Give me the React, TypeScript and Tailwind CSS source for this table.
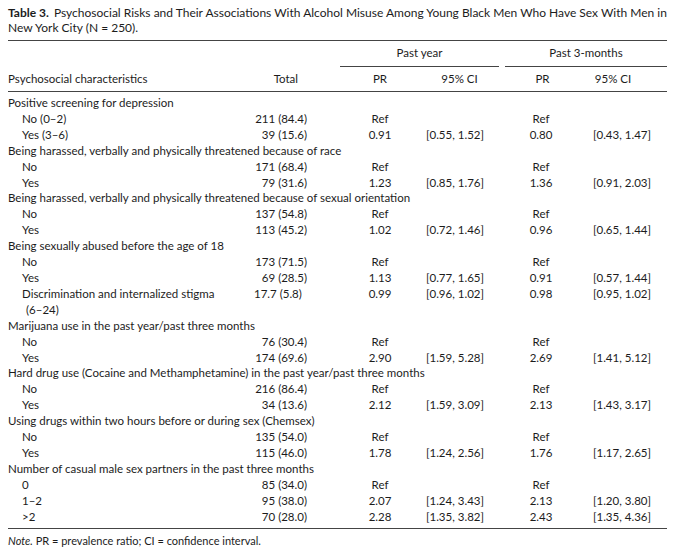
const rows: {
  label: string;
  sub?: boolean;
  total?: string;
  pr1?: string;
  ci1?: string;
  pr2?: string;
  ci2?: string;
}[] = [
  { label: "Positive screening for depression" },
  { label: "No (0–2)", sub: true, total: "211 (84.4)", pr1: "Ref", pr2: "Ref" },
  { label: "Yes (3–6)", sub: true, total: "39 (15.6)", pr1: "0.91", ci1: "[0.55, 1.52]", pr2: "0.80", ci2: "[0.43, 1.47]" },
  { label: "Being harassed, verbally and physically threatened because of race" },
  { label: "No", sub: true, total: "171 (68.4)", pr1: "Ref", pr2: "Ref" },
  { label: "Yes", sub: true, total: "79 (31.6)", pr1: "1.23", ci1: "[0.85, 1.76]", pr2: "1.36", ci2: "[0.91, 2.03]" },
  { label: "Being harassed, verbally and physically threatened because of sexual orientation" },
  { label: "No", sub: true, total: "137 (54.8)", pr1: "Ref", pr2: "Ref" },
  { label: "Yes", sub: true, total: "113 (45.2)", pr1: "1.02", ci1: "[0.72, 1.46]", pr2: "0.96", ci2: "[0.65, 1.44]" },
  { label: "Being sexually abused before the age of 18" },
  { label: "No", sub: true, total: "173 (71.5)", pr1: "Ref", pr2: "Ref" },
  { label: "Yes", sub: true, total: "69 (28.5)", pr1: "1.13", ci1: "[0.77, 1.65]", pr2: "0.91", ci2: "[0.57, 1.44]" },
  { label: "STIGMA" },
  { label: "Marijuana use in the past year/past three months" },
  { label: "No", sub: true, total: "76 (30.4)", pr1: "Ref", pr2: "Ref" },
  { label: "Yes", sub: true, total: "174 (69.6)", pr1: "2.90", ci1: "[1.59, 5.28]", pr2: "2.69", ci2: "[1.41, 5.12]" },
  { label: "Hard drug use (Cocaine and Methamphetamine) in the past year/past three months" },
  { label: "No", sub: true, total: "216 (86.4)", pr1: "Ref", pr2: "Ref" },
  { label: "Yes", sub: true, total: "34 (13.6)", pr1: "2.12", ci1: "[1.59, 3.09]", pr2: "2.13", ci2: "[1.43, 3.17]" },
  { label: "Using drugs within two hours before or during sex (Chemsex)" },
  { label: "No", sub: true, total: "135 (54.0)", pr1: "Ref", pr2: "Ref" },
  { label: "Yes", sub: true, total: "115 (46.0)", pr1: "1.78", ci1: "[1.24, 2.56]", pr2: "1.76", ci2: "[1.17, 2.65]" },
  { label: "Number of casual male sex partners in the past three months" },
  { label: "0", sub: true, total: "85 (34.0)", pr1: "Ref", pr2: "Ref" },
  { label: "1–2", sub: true, total: "95 (38.0)", pr1: "2.07", ci1: "[1.24, 3.43]", pr2: "2.13", ci2: "[1.20, 3.80]" },
  { label: ">2", sub: true, total: "70 (28.0)", pr1: "2.28", ci1: "[1.35, 3.82]", pr2: "2.43", ci2: "[1.35, 4.36]" },
];

const cols =
  "grid grid-cols-[242px_57px_33px_80px_79px_6px_72px_90px]";

export default function App() {
  return (
    <div
      className="w-[675px] h-[558px] bg-white text-[#1c1c1c] pl-[8px] pr-[8px] pt-[5px]"
      style={{ fontFamily: "Lato, 'Open Sans', sans-serif" }}
    >
      {/* Caption */}
      <div className="text-[12px] leading-[15px]">
        <div className="flex whitespace-nowrap">
          <span className="font-bold pr-[5px]">Table 3.</span>
          <span>
            Psychosocial Risks and Their Associations With Alcohol Misuse Among
            Young Black Men Who Have Sex With Men in
          </span>
        </div>
        <div>New York City (N = 250).</div>
      </div>

      <div className="mt-[5px] w-[659px] border-t border-[#444] text-[11.5px]">
        {/* Group header */}
        <div className={cols}>
          <div className="col-span-3" />
          <div className="col-span-2 pt-[4px] pb-[5px] leading-[16px] text-center border-b border-[#444]">
            Past year
          </div>
          <div />
          <div className="col-span-2 pt-[4px] pb-[5px] leading-[16px] text-center border-b border-[#444]">
            Past 3-months
          </div>
        </div>

        {/* Column header */}
        <div className={`${cols} leading-[16px] pt-[4px] pb-[4px] border-b border-[#444]`}>
          <div>Psychosocial characteristics</div>
          <div className="text-right pr-[9px]">Total</div>
          <div />
          <div className="text-center">PR</div>
          <div className="text-center">95% CI</div>
          <div />
          <div className="text-center pl-[3px]">PR</div>
          <div className="text-center pr-[18px]">95% CI</div>
        </div>

        {/* Body */}
        <div className="pt-[3px] pb-[4px] border-b border-[#444] leading-[15.9px]">
          {rows.map((r, i) =>
            r.label === "STIGMA" ? (
              <div key={i} className={cols}>
                <div className="pl-[14px]">
                  <div>Discrimination and internalized stigma</div>
                  <div className="pl-[4px]">(6–24)</div>
                </div>
                <div className="pl-[4px] whitespace-nowrap">17.7 (5.8)</div>
                <div />
                <div className="text-center">0.99</div>
                <div className="text-center pr-[9px]">[0.96, 1.02]</div>
                <div />
                <div className="text-center">0.98</div>
                <div className="text-center">[0.95, 1.02]</div>
              </div>
            ) : r.sub ? (
              <div key={i} className={cols}>
                <div className="pl-[14px]">{r.label}</div>
                <div className="text-right whitespace-nowrap">{r.total}</div>
                <div />
                <div className="text-center">{r.pr1}</div>
                <div className="text-center pr-[9px] whitespace-nowrap">{r.ci1}</div>
                <div />
                <div className="text-center">{r.pr2}</div>
                <div className="text-center whitespace-nowrap">{r.ci2}</div>
              </div>
            ) : (
              <div key={i} className="whitespace-nowrap">
                {r.label}
              </div>
            )
          )}
        </div>

        {/* Note */}
        <p className="text-[11px] leading-[16px] pt-[4px]">
          <span className="italic">Note.</span> PR = prevalence ratio; CI =
          confidence interval.
        </p>
      </div>
    </div>
  );
}
